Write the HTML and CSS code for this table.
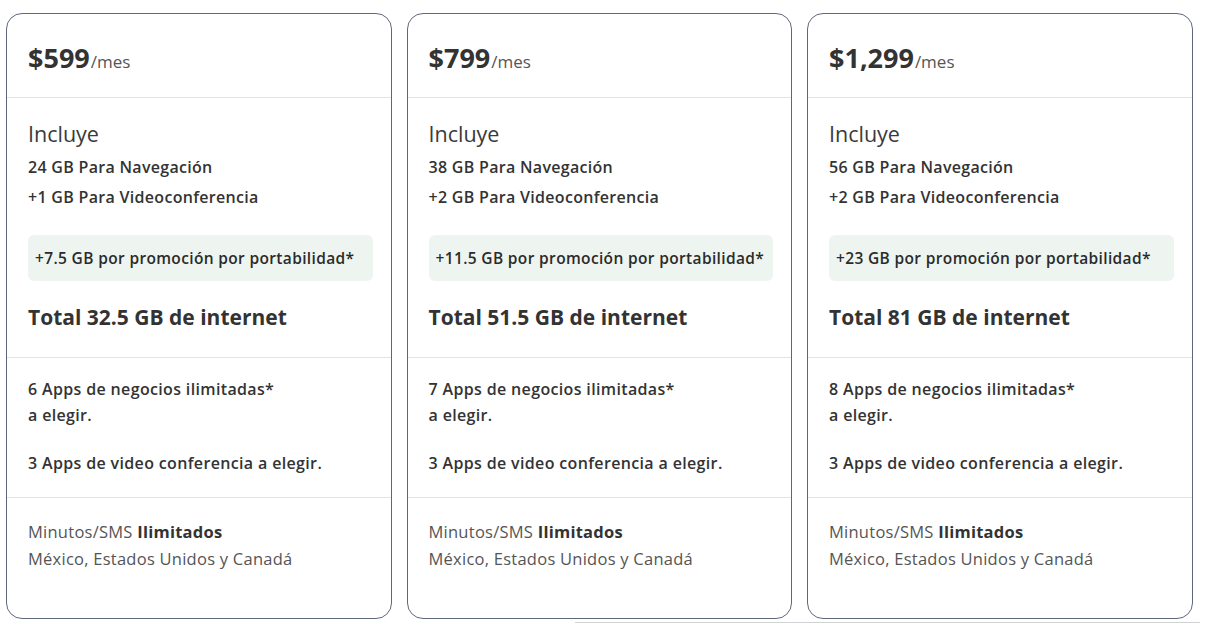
FILE: index.html
```html
<!DOCTYPE html>
<html lang="es">
<head>
<meta charset="utf-8">
<title>Planes</title>
<link rel="stylesheet" href="styles.css">
</head>
<body>
<div class="plans">
  <div class="card">
    <div class="sec price-sec"><span class="price">$599</span><span class="per">/mes</span></div>
    <div class="sec inc-sec">
      <div class="inc-title">Incluye</div>
      <div class="inc-line">24 GB Para Navegación</div>
      <div class="inc-line">+1 GB Para Videoconferencia</div>
      <div class="promo">+7.5 GB por promoción por portabilidad*</div>
      <div class="total">Total 32.5 GB de internet</div>
    </div>
    <div class="sec apps-sec">
      <div class="app-line">6 Apps de negocios ilimitadas*</div>
      <div class="app-line">a elegir.</div>
      <div class="app-line gap">3 Apps de video conferencia a elegir.</div>
    </div>
    <div class="sec min-sec">
      <div class="min-line">Minutos/SMS <b>Ilimitados</b></div>
      <div class="min-line">México, Estados Unidos y Canadá</div>
    </div>
  </div>
  <div class="card">
    <div class="sec price-sec"><span class="price">$799</span><span class="per">/mes</span></div>
    <div class="sec inc-sec">
      <div class="inc-title">Incluye</div>
      <div class="inc-line">38 GB Para Navegación</div>
      <div class="inc-line">+2 GB Para Videoconferencia</div>
      <div class="promo">+11.5 GB por promoción por portabilidad*</div>
      <div class="total">Total 51.5 GB de internet</div>
    </div>
    <div class="sec apps-sec">
      <div class="app-line">7 Apps de negocios ilimitadas*</div>
      <div class="app-line">a elegir.</div>
      <div class="app-line gap">3 Apps de video conferencia a elegir.</div>
    </div>
    <div class="sec min-sec">
      <div class="min-line">Minutos/SMS <b>Ilimitados</b></div>
      <div class="min-line">México, Estados Unidos y Canadá</div>
    </div>
  </div>
  <div class="card">
    <div class="sec price-sec"><span class="price">$1,299</span><span class="per">/mes</span></div>
    <div class="sec inc-sec">
      <div class="inc-title">Incluye</div>
      <div class="inc-line">56 GB Para Navegación</div>
      <div class="inc-line">+2 GB Para Videoconferencia</div>
      <div class="promo">+23 GB por promoción por portabilidad*</div>
      <div class="total">Total 81 GB de internet</div>
    </div>
    <div class="sec apps-sec">
      <div class="app-line">8 Apps de negocios ilimitadas*</div>
      <div class="app-line">a elegir.</div>
      <div class="app-line gap">3 Apps de video conferencia a elegir.</div>
    </div>
    <div class="sec min-sec">
      <div class="min-line">Minutos/SMS <b>Ilimitados</b></div>
      <div class="min-line">México, Estados Unidos y Canadá</div>
    </div>
  </div>
</div>
<div class="rule"></div>
</body>
</html>
```

FILE: styles.css
```css
html, body {
  margin: 0;
  padding: 0;
  background: #ffffff;
}
body {
  padding: 13px 6px 0 6px;
  font-family: "Open Sans", "Noto Sans", sans-serif;
  color: #333333;
}
.plans {
  display: grid;
  grid-template-columns: 385.5px 385.5px 385.5px;
  column-gap: 15px;
}
.card {
  border: 1.5px solid #5f687a;
  border-radius: 16px;
  background: #fff;
  display: flex;
  flex-direction: column;
}
.sec {
  padding: 0 18px 0 21px;
}
.sec + .sec {
  border-top: 1px solid #e4e4e4;
}
.price-sec {
  padding-top: 30px;
  padding-bottom: 21px;
  line-height: 32px;
  height: 32px;
  white-space: nowrap;
}
.price {
  font-size: 27px;
  font-weight: 700;
  color: #333;
  line-height: 1;
}
.per {
  font-size: 17px;
  color: #555;
  margin-left: 1px;
  line-height: 1;
}
.inc-sec {
  padding-top: 22px;
  padding-bottom: 26px;
}
.inc-title {
  font-size: 21.5px;
  line-height: 28px;
  color: #3a3a3a;
  margin-bottom: 4px;
}
.inc-line {
  font-size: 16px;
  font-weight: 600;
  letter-spacing: 0.3px;
  line-height: 30px;
  color: #333;
}
.promo {
  margin-top: 23px;
  height: 46px;
  display: flex;
  align-items: center;
  padding: 0 7px;
  background: #eef5f0;
  border-radius: 6px;
  font-size: 15.5px;
  font-weight: 600;
  letter-spacing: 0.35px;
  color: #2b2b2b;
  white-space: nowrap;
}
.total {
  margin-top: 22px;
  font-size: 21px;
  font-weight: 700;
  line-height: 28px;
  color: #333;
}
.apps-sec {
  padding-top: 18px;
  padding-bottom: 21px;
}
.app-line {
  font-size: 16px;
  font-weight: 600;
  letter-spacing: 0.35px;
  line-height: 26px;
  color: #333;
}
.app-line.gap {
  margin-top: 22px;
}
.min-sec {
  padding-top: 20px;
  padding-bottom: 46px;
}
.min-line {
  font-size: 16.5px;
  letter-spacing: 0.25px;
  line-height: 27px;
  color: #555;
}
.min-line b {
  font-weight: 700;
  color: #333;
}
.rule {
  margin: 3px 0 0 569px;
  height: 1px;
  background: #d2d2d2;
}
```
